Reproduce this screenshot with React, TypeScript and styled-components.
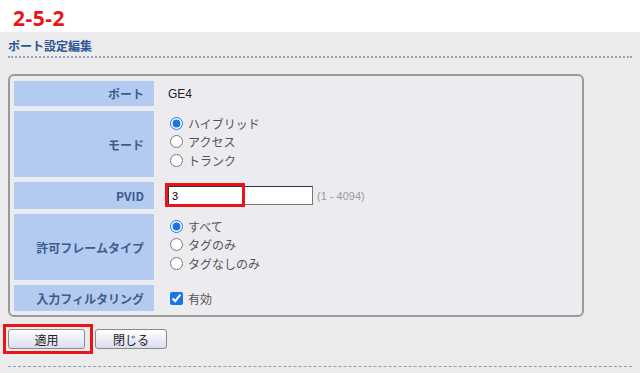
import React from "react";
import styled, { createGlobalStyle } from "styled-components";

const GlobalStyle = createGlobalStyle`
  html, body {
    margin: 0;
    padding: 0;
    background: #ffffff;
  }
  body {
    font-family: "Noto Sans CJK JP", "Noto Sans", sans-serif;
  }
`;

const Page = styled.div`
  width: 640px;
  height: 373px;
  overflow: hidden;
`;

const StepBar = styled.div`
  height: 32px;
  background: #ffffff;
  padding: 4px 0 0 13px;
  box-sizing: border-box;
  display: flex;
  align-items: center;
`;

const StepNo = styled.span`
  color: #e8141a;
  font-family: "Noto Sans", sans-serif;
  font-weight: 700;
  font-size: 21px;
  letter-spacing: 0.5px;
`;

const Content = styled.div`
  background: #ebebeb;
  height: 341px;
  padding: 6px 8px 0 8px;
  box-sizing: border-box;
`;

const Title = styled.div`
  color: #2b5797;
  font-weight: 700;
  font-size: 12px;
  line-height: 16px;
  padding-bottom: 2px;
  border-bottom: 2px dotted #93a6bd;
  width: 624px;
`;

const Panel = styled.div`
  margin-top: 16px;
  width: 576px;
  box-sizing: border-box;
  border: 2px solid #9a9a9a;
  border-radius: 6px;
  background: #ececf0;
  padding: 5px 4px 4px 4px;
  display: flex;
  flex-direction: column;
  gap: 5px;
`;

const Row = styled.div<{ $h: number }>`
  display: flex;
  height: ${(p) => p.$h}px;
`;

const Label = styled.div`
  width: 140px;
  flex: none;
  background: #b4cbf1;
  color: #3d5c8e;
  font-weight: 700;
  font-size: 12px;
  display: flex;
  align-items: center;
  justify-content: flex-end;
  padding-right: 10px;
  box-sizing: border-box;
`;

const Value = styled.div<{ $list?: boolean }>`
  padding-left: 14px;
  display: flex;
  flex-direction: column;
  justify-content: ${(p) => (p.$list ? "flex-start" : "center")};
  padding-top: ${(p) => (p.$list ? "3px" : "0")};
  font-size: 12px;
  color: #333;
`;

const PlainText = styled.span`
  font-family: "Liberation Sans", Arial, sans-serif;
  font-size: 12px;
  color: #222;
`;

const Option = styled.label`
  display: flex;
  align-items: center;
  height: 18.5px;
  font-size: 12px;
  color: #555;
  gap: 5px;
`;

const Radio = styled.input.attrs({ type: "radio" })`
  margin: 0 0 0 2px;
  width: 13px;
  height: 13px;
  accent-color: #1a73e8;
`;

const Check = styled.input.attrs({ type: "checkbox" })`
  margin: 0 0 0 2px;
  width: 13px;
  height: 13px;
  accent-color: #1a73e8;
`;

const InputLine = styled.div`
  display: flex;
  align-items: center;
  gap: 4px;
`;

const Highlight = styled.span`
  position: relative;
  display: inline-flex;
`;

const RedFrame = styled.span<{ $l: number; $t: number; $w: number; $h: number }>`
  position: absolute;
  left: ${(p) => p.$l}px;
  top: ${(p) => p.$t}px;
  width: ${(p) => p.$w}px;
  height: ${(p) => p.$h}px;
  border: 3px solid #e8141a;
  box-sizing: border-box;
  pointer-events: none;
`;

const TextInput = styled.input`
  width: 145px;
  height: 19px;
  box-sizing: border-box;
  border: 1px solid #767676;
  border-top-color: #333;
  border-left-color: #333;
  background: #fff;
  font-family: "Liberation Sans", Arial, sans-serif;
  font-size: 11px;
  padding: 0 3px;
  margin: 0;
`;

const Range = styled.span`
  font-family: "Liberation Sans", Arial, sans-serif;
  font-size: 11px;
  color: #9a9a9a;
`;

const Buttons = styled.div`
  display: flex;
  gap: 10px;
  margin-top: 12px;
  height: 20px;
`;

const Btn = styled.button<{ $w: number }>`
  width: ${(p) => p.$w}px;
  height: 20px;
  border: 1px solid #8a8a8a;
  border-radius: 3px;
  background: linear-gradient(#ffffff, #dcdcf0);
  font-family: "Noto Sans CJK JP", sans-serif;
  font-size: 12px;
  color: #222;
  padding: 0;
  margin: 0;
`;

const BottomRule = styled.div`
  margin-top: 17px;
  width: 624px;
  border-bottom: 1px dashed #8aa0bb;
`;

const App: React.FC = () => {
  return (
    <Page>
      <GlobalStyle />
      <StepBar>
        <StepNo>2-5-2</StepNo>
      </StepBar>
      <Content>
        <Title>ポート設定編集</Title>
        <Panel>
          <Row $h={25}>
            <Label>ポート</Label>
            <Value>
              <PlainText>GE4</PlainText>
            </Value>
          </Row>
          <Row $h={66}>
            <Label>モード</Label>
            <Value $list>
              <Option><Radio name="mode" defaultChecked />ハイブリッド</Option>
              <Option><Radio name="mode" />アクセス</Option>
              <Option><Radio name="mode" />トランク</Option>
            </Value>
          </Row>
          <Row $h={27}>
            <Label>PVID</Label>
            <Value>
              <InputLine>
                <Highlight>
                  <TextInput defaultValue="3" />
                  <RedFrame $l={-3} $t={-3} $w={80} $h={24} />
                </Highlight>
                <Range>(1 - 4094)</Range>
              </InputLine>
            </Value>
          </Row>
          <Row $h={66}>
            <Label>許可フレームタイプ</Label>
            <Value $list>
              <Option><Radio name="frame" defaultChecked />すべて</Option>
              <Option><Radio name="frame" />タグのみ</Option>
              <Option><Radio name="frame" />タグなしのみ</Option>
            </Value>
          </Row>
          <Row $h={26}>
            <Label>入力フィルタリング</Label>
            <Value>
              <Option><Check defaultChecked />有効</Option>
            </Value>
          </Row>
        </Panel>
        <Buttons>
          <Highlight>
            <Btn $w={77}>適用</Btn>
            <RedFrame $l={-5} $t={-5} $w={90} $h={30} />
          </Highlight>
          <Btn $w={72}>閉じる</Btn>
        </Buttons>
        <BottomRule />
      </Content>
    </Page>
  );
};

export default App;
